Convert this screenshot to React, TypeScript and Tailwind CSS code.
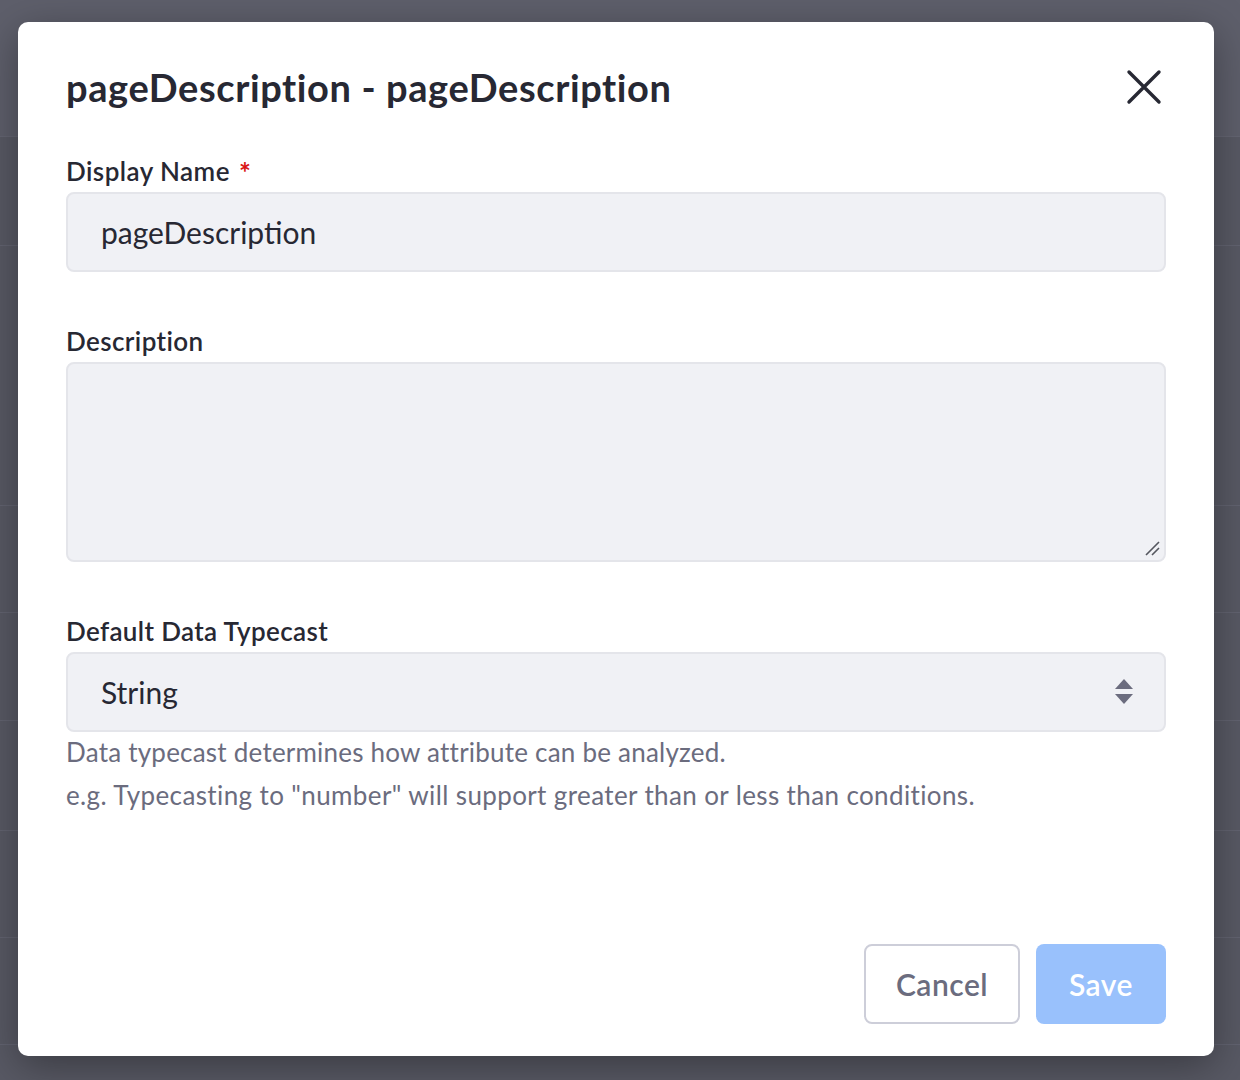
import React from 'react';

const rows = [137, 245, 505, 612, 720, 830, 937, 1044];

const App: React.FC = () => {
  return (
    <div className="relative w-[1240px] h-[1080px] overflow-hidden bg-[#585964]" style={{ fontFamily: 'Lato, "Open Sans", sans-serif' }}>
      {/* page behind the overlay */}
      <div className="absolute inset-0 pointer-events-none">
        <div className="h-[137px] bg-[#5e5f6b] border-b border-[#646572]"></div>
        {rows.slice(1).map((y) => (
          <div key={y} className="absolute left-0 right-0 border-t border-[#626370]" style={{ top: y }}></div>
        ))}
      </div>

      <div className="relative pt-[22px] px-[18px]">
        <div className="w-[1196px] h-[1034px] bg-white rounded-[10px] shadow-[0_10px_40px_rgba(0,0,0,0.35)] px-[48px] pt-[40px] pb-[32px] flex flex-col">
          <div className="flex items-center justify-between h-[50px]">
            <h1 className="text-[38px] font-bold text-[#272833] tracking-[0.6px]">pageDescription - pageDescription</h1>
            <button className="w-[40px] h-[40px] flex items-center justify-center text-[#272833] mr-[2px]">
              <svg width="36" height="36" viewBox="0 0 36 36" fill="none" stroke="currentColor" strokeWidth="3.4" strokeLinecap="round">
                <path d="M3 3 L33 33 M33 3 L3 33" />
              </svg>
            </button>
          </div>

          <label className="mt-[42px] h-[34px] text-[26px] font-semibold text-[#272833] leading-[34px] tracking-[0.45px] flex items-start overflow-visible">
            Display Name
            <span className="text-[#da1414] text-[28px] leading-[34px] font-bold ml-[9px] mt-[1px]">*</span>
          </label>
          <div className="mt-[4px] h-[80px] rounded-[8px] bg-[#f0f1f5] border-2 border-[#e4e5ea] flex items-center px-[33px] text-[30px] text-[#272833]">
            pageDescription
          </div>

          <label className="mt-[52px] text-[26px] font-semibold text-[#272833] leading-[34px] tracking-[0.4px]">Description</label>
          <div className="relative mt-[4px] h-[200px] rounded-[8px] bg-[#f0f1f5] border-2 border-[#e4e5ea]">
            <svg className="absolute right-[4px] bottom-[4px]" width="16" height="16" viewBox="0 0 16 16" stroke="#55575f" strokeWidth="1.6">
              <path d="M2 15 L15 2 M8 15 L15 8" />
            </svg>
          </div>

          <label className="mt-[52px] text-[26px] font-semibold text-[#272833] leading-[34px] tracking-[0.35px]">Default Data Typecast</label>
          <div className="mt-[4px] h-[80px] rounded-[8px] bg-[#f0f1f5] border-2 border-[#e4e5ea] flex items-center justify-between px-[33px] pr-[30px] text-[30px] text-[#272833]">
            <span>String</span>
            <svg width="20" height="28" viewBox="0 0 20 28" fill="#6b6c7e">
              <path d="M10 1 L19 11 L1 11 Z" />
              <path d="M1 16 L19 16 L10 26 Z" />
            </svg>
          </div>
          <p className="mt-[-1px] text-[26px] text-[#6b6c7e] leading-[43px] tracking-[0.22px]">Data typecast determines how attribute can be analyzed.</p>
          <p className="text-[26px] text-[#6b6c7e] leading-[43px] tracking-[0.38px]">e.g. Typecasting to "number" will support greater than or less than conditions.</p>

          <div className="mt-auto flex justify-end gap-[16px]">
            <button className="w-[156px] h-[80px] rounded-[8px] border-2 border-[#cdced9] bg-white text-[30px] font-semibold text-[#6b6c7e] tracking-[0.5px]">Cancel</button>
            <button className="w-[130px] h-[80px] rounded-[8px] bg-[#99c1fc] text-[30px] font-semibold text-white tracking-[0.5px]">Save</button>
          </div>
        </div>
      </div>
    </div>
  );
};

export default App;
